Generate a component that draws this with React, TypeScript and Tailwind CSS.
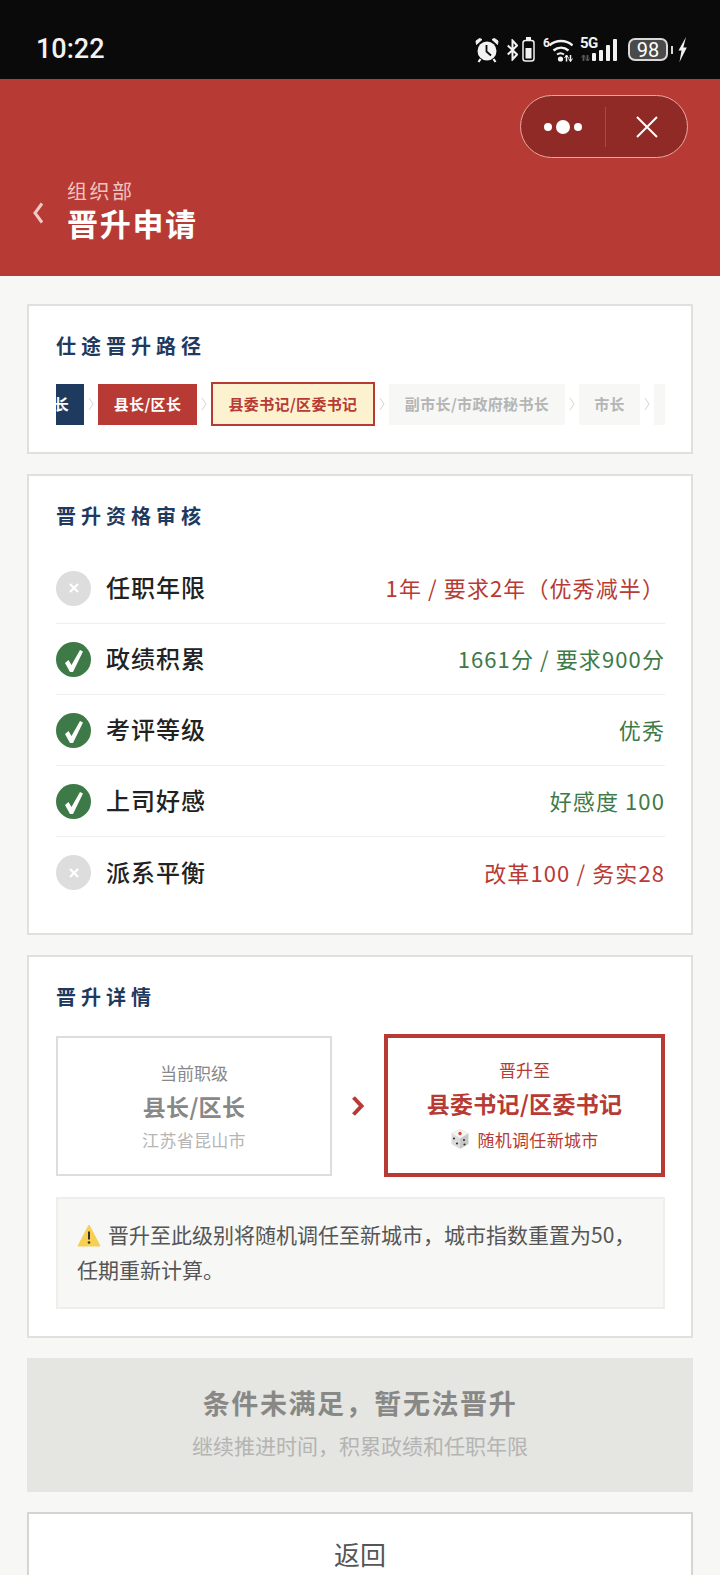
import React from 'react';

const font = { fontFamily: '"Noto Sans CJK SC", "Noto Sans", sans-serif' };
const roboto = { fontFamily: 'Roboto, sans-serif' };

const StatusIcons = () => (
  <div className="flex items-center text-[#f2f2f2]">
    {/* alarm */}
    <svg width="24" height="26" viewBox="0 0 24 26" fill="none">
      <circle cx="12" cy="14" r="9.500" fill="#f2f2f2" />
      <path d="M11.500 8v6.500l4.500 4" stroke="#0a0a0a" strokeWidth="1.800" />
      <path d="M1.500 7.500 7 2.500 4.500 1.500 1 4zM22.500 7.500 17 2.500 19.500 1.500 23 4z" fill="#f2f2f2" stroke="#f2f2f2" strokeWidth="1" />
      <path d="M5.500 22 3.500 25M18.500 22l2 3" stroke="#f2f2f2" strokeWidth="2.200" />
    </svg>
    {/* bluetooth */}
    <svg className="ml-[8px]" width="11" height="22" viewBox="0 0 11 22" fill="none">
      <path d="M.8 6.500 10 15.500 5.500 20.500V1.500L10 6.500.8 15.500" stroke="#f2f2f2" strokeWidth="2" />
    </svg>
    {/* small battery */}
    <svg className="ml-[4px]" width="13" height="25" viewBox="0 0 13 25" fill="none">
      <rect x="4" y="0" width="5" height="3" fill="#f2f2f2" />
      <rect x="1" y="3.500" width="11" height="20.500" rx="2.500" stroke="#f2f2f2" strokeWidth="1.500" />
      <rect x="3.500" y="11" width="6" height="10.500" fill="#f2f2f2" />
    </svg>
    {/* wifi */}
    <span className="ml-[8px] mb-[14px] w-[6px] text-[12px] leading-none font-bold" style={roboto}>6</span>
    <svg width="24" height="24" viewBox="0 0 24 24" fill="none">
      <path d="M.5 7.500C6.500 1.500 17.500 1.500 23.500 7.500" stroke="#f2f2f2" strokeWidth="2.400" />
      <path d="M4.500 12.500c4.500-3.800 10.500-3.800 15 0" stroke="#f2f2f2" strokeWidth="2.400" />
      <path d="M8 16.500c2-1.500 5-1.500 7 0" stroke="#f2f2f2" strokeWidth="2" />
      <circle cx="11.500" cy="21" r="2.600" fill="#f2f2f2" />
      <path d="M17.500 17v6.500M21.500 17v6.500" stroke="#f2f2f2" strokeWidth="1.500" />
      <path d="M15.500 20l2-3 2 3M19.500 20.500l2 3 2-3" stroke="#f2f2f2" strokeWidth="1" />
    </svg>
    {/* 5g signal */}
    <div className="relative ml-[7px] w-[37px] h-[24px]">
      <span className="absolute left-0 top-[-2px] text-[15px] leading-none font-bold tracking-[-0.5px]" style={roboto}>5G</span>
      <svg className="absolute left-0 top-0" width="37" height="24" viewBox="0 0 37 24" fill="none">
        <path d="M3.500 17v6M7.500 17v6" stroke="#5a5a5a" strokeWidth="1.800" />
        <path d="M1.500 19.500l2-2.500 2 2.500M5.500 20.500l2 2.500 2-2.500" stroke="#5a5a5a" strokeWidth="1" />
        <rect x="12" y="15" width="4" height="8" rx="1" fill="#f2f2f2" />
        <rect x="19" y="12" width="4" height="11" rx="1" fill="#f2f2f2" />
        <rect x="26" y="7" width="4" height="16" rx="1" fill="#f2f2f2" />
        <rect x="33" y="1" width="4" height="22" rx="1" fill="#f2f2f2" />
      </svg>
    </div>
    {/* battery */}
    <div className="ml-[11px] w-[40px] h-[23px] rounded-[7px] border-2 border-[#d8d8d8] bg-[#4a4a4a] flex items-center justify-center text-[20px] leading-none text-white" style={roboto}>98</div>
    <div className="ml-[3px] w-[2px] h-[8px] bg-[#d8d8d8]" />
    <svg className="ml-[5px]" width="9" height="25" viewBox="0 0 9 25">
      <path d="M8 0 .5 13.500h3L1.500 25 8.800 10.500H5.300z" fill="#f2f2f2" />
    </svg>
  </div>
);

const CheckRow = ({ ok, label, value, last }: { ok: boolean; label: string; value: string; last?: boolean }) => (
  <div className={`h-[71px] flex items-center justify-between ${last ? '' : 'border-b border-[#eeeeec]'}`}>
    <div className="flex items-center">
      {ok ? (
        <div className="w-[35px] h-[35px] rounded-full bg-[#3d7a47]">
          <svg width="35" height="35" viewBox="0 0 35 35">
            <path d="M9 21l3.500-3 3 5L24 8l3 1.500L17 30h-3z" fill="#fff" />
          </svg>
        </div>
      ) : (
        <div className="w-[35px] h-[35px] rounded-full bg-[#dddddd] flex items-center justify-center">
          <svg width="10" height="10" viewBox="0 0 10 10" fill="none">
            <path d="M1 1l8 8M9 1l-8 8" stroke="#fff" strokeWidth="2.200" />
          </svg>
        </div>
      )}
      <span className="ml-[15px] mb-[2px] text-[24px] leading-none font-medium tracking-[1px] text-[#222222]">{label}</span>
    </div>
    <span className={`mb-[2px] text-[22px] leading-none tracking-[1.1px] ${ok ? 'text-[#3d7a47]' : 'text-[#b83a34]'}`}>{value}</span>
  </div>
);

const Chevron = () => (
  <svg className="shrink-0 mx-[4px]" width="6" height="14" viewBox="0 0 6 14" fill="none">
    <path d="M1 1l4 6-4 6" stroke="#d4d4d4" strokeWidth="1" />
  </svg>
);

const SectionTitle = ({ children }: { children: React.ReactNode }) => (
  <h2 className="text-[20px] leading-none font-bold tracking-[5px] text-[#1f3a5f]">{children}</h2>
);

export default function App() {
  return (
    <div className="w-[720px] h-[1575px] overflow-hidden bg-[#f7f7f5]" style={font}>
      {/* status bar */}
      <div className="h-[79px] bg-[#0a0a0a] flex items-center justify-between pl-[36px] pr-[33px] pt-[20px]">
        <span className="text-[27px] leading-none font-medium text-[#f2f2f2]" style={roboto}>10:22</span>
        <StatusIcons />
      </div>

      {/* header */}
      <header className="h-[197px] bg-[#b83a34] pt-[16px] pr-[32px]">
        <div className="flex justify-end">
          <div className="w-[168px] h-[63px] rounded-full border-[1.5px] border-[#e8a8a0] bg-[#8f2a27] flex items-center">
            <div className="w-[84px] flex items-center justify-center gap-[4px]">
              <span className="w-[8px] h-[8px] rounded-full bg-white" />
              <span className="w-[14px] h-[14px] rounded-full bg-white" />
              <span className="w-[8px] h-[8px] rounded-full bg-white" />
            </div>
            <div className="w-px h-[40px] bg-[#a8494a]" />
            <div className="flex-1 flex items-center justify-center">
              <svg width="22" height="22" viewBox="0 0 22 22" fill="none">
                <path d="M1 1l20 20M21 1 1 21" stroke="#fff" strokeWidth="2" />
              </svg>
            </div>
          </div>
        </div>
        <div className="flex items-center mt-[20px] pl-[32px]">
          <svg className="mt-[10px]" width="12" height="22" viewBox="0 0 12 22" fill="none">
            <path d="M10 1.500 3 11l7 9.500" stroke="#f3c9c5" strokeWidth="3" />
          </svg>
          <div className="ml-[23px]">
            <div className="text-[20px] leading-none tracking-[2.500px] text-[#f0c4c0] mt-[3px]">组织部</div>
            <h1 className="mt-[6px] text-[31px] leading-none font-bold tracking-[1.700px] text-white">晋升申请</h1>
          </div>
        </div>
      </header>

      <main className="px-[27px] pt-[28px] flex flex-col gap-[20px]">
        {/* career path */}
        <section className="h-[150px] bg-white border-2 border-[#e0e0de] pl-[27px] pr-[26px] pt-[30px]">
          <SectionTitle>仕途晋升路径</SectionTitle>
          <div className="mt-[25px] h-[46px] overflow-hidden flex items-center text-[15px] font-bold tracking-[0.35px] whitespace-nowrap">
            <div className="shrink-0 w-[28px] h-[41px] bg-[#1f3a5f] text-white flex items-center justify-end pr-[15px] overflow-hidden">
              <span className="shrink-0">长</span>
            </div>
            <Chevron />
            <div className="shrink-0 w-[99px] h-[41px] bg-[#b83a34] text-white flex items-center justify-center">县长/区长</div>
            <Chevron />
            <div className="shrink-0 w-[164px] h-[44px] bg-[#fdf2d0] border-2 border-[#b83a34] text-[#b83a34] flex items-center justify-center">县委书记/区委书记</div>
            <Chevron />
            <div className="shrink-0 w-[176px] h-[41px] bg-[#f7f7f5] text-[#b5b5b5] flex items-center justify-center">副市长/市政府秘书长</div>
            <Chevron />
            <div className="shrink-0 w-[61px] h-[41px] bg-[#f7f7f5] text-[#b5b5b5] flex items-center justify-center">市长</div>
            <Chevron />
            <div className="shrink-0 w-[40px] h-[41px] bg-[#f7f7f5]" />
          </div>
        </section>

        {/* checks */}
        <section className="h-[461px] bg-white border-2 border-[#e0e0de] pl-[27px] pr-[26px] pt-[30px]">
          <SectionTitle>晋升资格审核</SectionTitle>
          <div className="mt-[27px]">
            <CheckRow ok={false} label="任职年限" value="1年 / 要求2年（优秀减半）" />
            <CheckRow ok label="政绩积累" value="1661分 / 要求900分" />
            <CheckRow ok label="考评等级" value="优秀" />
            <CheckRow ok label="上司好感" value="好感度 100" />
            <CheckRow ok={false} label="派系平衡" value="改革100 / 务实28" last />
          </div>
        </section>

        {/* details */}
        <section className="h-[383px] bg-white border-2 border-[#e0e0de] pl-[27px] pr-[26px] pt-[30px]">
          <SectionTitle>晋升详情</SectionTitle>
          <div className="mt-[27px] flex items-center">
            <div className="w-[276px] h-[140px] border-2 border-[#dddddd] flex flex-col items-center justify-center">
              <div className="text-[17px] leading-none text-[#888888]">当前职级</div>
              <div className="mt-[14px] text-[23px] leading-none font-bold tracking-[0.3px] text-[#888888]">县长/区长</div>
              <div className="mt-[13px] text-[17px] leading-none tracking-[0.3px] text-[#b5b5b5]">江苏省昆山市</div>
            </div>
            <div className="w-[52px] flex justify-center">
              <svg width="14" height="20" viewBox="0 0 14 20" fill="none">
                <path d="M2.500 1.500 10.500 10l-8 8.500" stroke="#b83a34" strokeWidth="4" />
              </svg>
            </div>
            <div className="w-[281px] h-[143px] border-4 border-[#b83a34] flex flex-col items-center justify-center">
              <div className="text-[17px] leading-none text-[#b83a34]">晋升至</div>
              <div className="mt-[14px] text-[23px] leading-none font-bold tracking-[0.3px] text-[#b83a34]">县委书记/区委书记</div>
              <div className="mt-[13px] flex items-center text-[17px] leading-none tracking-[0.3px] text-[#b83a34]">
                <svg className="mr-[7px]" width="20" height="22" viewBox="0 0 20 22">
                  <path d="M10 1 18.500 5.500 10 10.500 1.500 5.500z" fill="#f4f4f4" stroke="#ddd" strokeWidth="0.500" />
                  <path d="M1.500 5.500 10 10.500V21L1.500 16z" fill="#dcdcdc" />
                  <path d="M18.500 5.500 10 10.500V21l8.500-5z" fill="#c8c8c8" />
                  <circle cx="10" cy="5.500" r="1.700" fill="#d8453a" />
                  <circle cx="4" cy="10.500" r="1.100" fill="#333" />
                  <circle cx="7" cy="15.500" r="1.100" fill="#333" />
                  <circle cx="14" cy="12" r="1.100" fill="#333" />
                  <circle cx="14.500" cy="16.500" r="1.100" fill="#333" />
                </svg>
                随机调任新城市
              </div>
            </div>
          </div>
          <div className="mt-[20px] h-[112px] bg-[#f7f7f5] border-2 border-[#eeeeec] pl-[19px] pr-[20px] pt-[18px] text-[21px] leading-[35px] text-[#555555]">
            <svg className="inline-block align-[-4px] mr-[7px]" width="24" height="24" viewBox="0 0 24 24">
              <path d="M12 2 23 23H1z" fill="#f7cf52" stroke="#f7cf52" strokeWidth="1" strokeLinejoin="round" />
              <path d="M12 8.500v8" stroke="#333" strokeWidth="2" />
              <circle cx="12" cy="19.500" r="1.300" fill="#333" />
            </svg>
            晋升至此级别将随机调任至新城市，城市指数重置为50，任期重新计算。
          </div>
        </section>

        {/* blocked action */}
        <div className="h-[134px] pb-[5px] bg-[#e5e5e2] flex flex-col items-center justify-center">
          <div className="text-[27px] leading-none font-bold tracking-[1.600px] text-[#888886]">条件未满足，暂无法晋升</div>
          <div className="mt-[19px] text-[21px] leading-none text-[#b4b4b2]">继续推进时间，积累政绩和任职年限</div>
        </div>

        {/* back */}
        <button className="h-[84px] shrink-0 bg-white border-2 border-[#d5d5d3] text-[26px] leading-none text-[#555555]">返回</button>
      </main>
    </div>
  );
}
